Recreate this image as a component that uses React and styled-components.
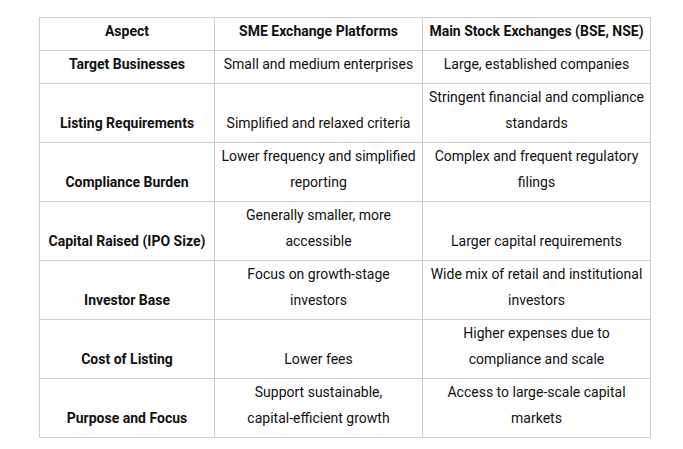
import React from "react";
import styled, { createGlobalStyle } from "styled-components";

const GlobalStyle = createGlobalStyle`
  html, body {
    margin: 0;
    padding: 0;
    background: #fff;
  }
`;

const Page = styled.div`
  padding: 17px 0 0 39px;
  font-family: "Roboto", "Liberation Sans", sans-serif;
  color: #111;
`;

const Table = styled.table`
  width: 611px;
  table-layout: fixed;
  border-collapse: collapse;
  font-size: 14px;
  line-height: 26px;
`;

const Cell = styled.td`
  border: 1px solid #cfcfcf;
  padding: 0 4px 6px;
  text-align: center;
  vertical-align: bottom;
  font-weight: ${(p) => (p.$bold ? 700 : 400)};
`;

const Head = styled.th`
  border: 1px solid #cfcfcf;
  padding: 0 4px 6px;
  text-align: center;
  vertical-align: bottom;
  font-weight: 700;
`;

const NoWrap = styled.span`
  white-space: nowrap;
`;

const rows = [
  ["Target Businesses", "Small and medium enterprises", "Large, established companies"],
  ["Listing Requirements", "Simplified and relaxed criteria", "Stringent financial and compliance standards"],
  ["Compliance Burden", "Lower frequency and simplified reporting", "Complex and frequent regulatory filings"],
  ["Capital Raised (IPO Size)", "Generally smaller, more accessible", "Larger capital requirements"],
  ["Investor Base", "Focus on growth-stage investors", "Wide mix of retail and institutional investors"],
  ["Cost of Listing", "Lower fees", "Higher expenses due to compliance and scale"],
  [
    "Purpose and Focus",
    <>Support sustainable, <NoWrap>capital-efficient</NoWrap> growth</>,
    "Access to large-scale capital markets",
  ],
];

export default function App() {
  return (
    <Page>
      <GlobalStyle />
      <Table>
        <colgroup>
          <col style={{ width: 175 }} />
          <col style={{ width: 208 }} />
          <col style={{ width: 228 }} />
        </colgroup>
        <thead>
          <tr>
            <Head>Aspect</Head>
            <Head>SME Exchange Platforms</Head>
            <Head>Main Stock Exchanges (BSE, NSE)</Head>
          </tr>
        </thead>
        <tbody>
          {rows.map((r) => (
            <tr key={r[0]}>
              <Cell $bold>{r[0]}</Cell>
              <Cell>{r[1]}</Cell>
              <Cell>{r[2]}</Cell>
            </tr>
          ))}
        </tbody>
      </Table>
    </Page>
  );
}
